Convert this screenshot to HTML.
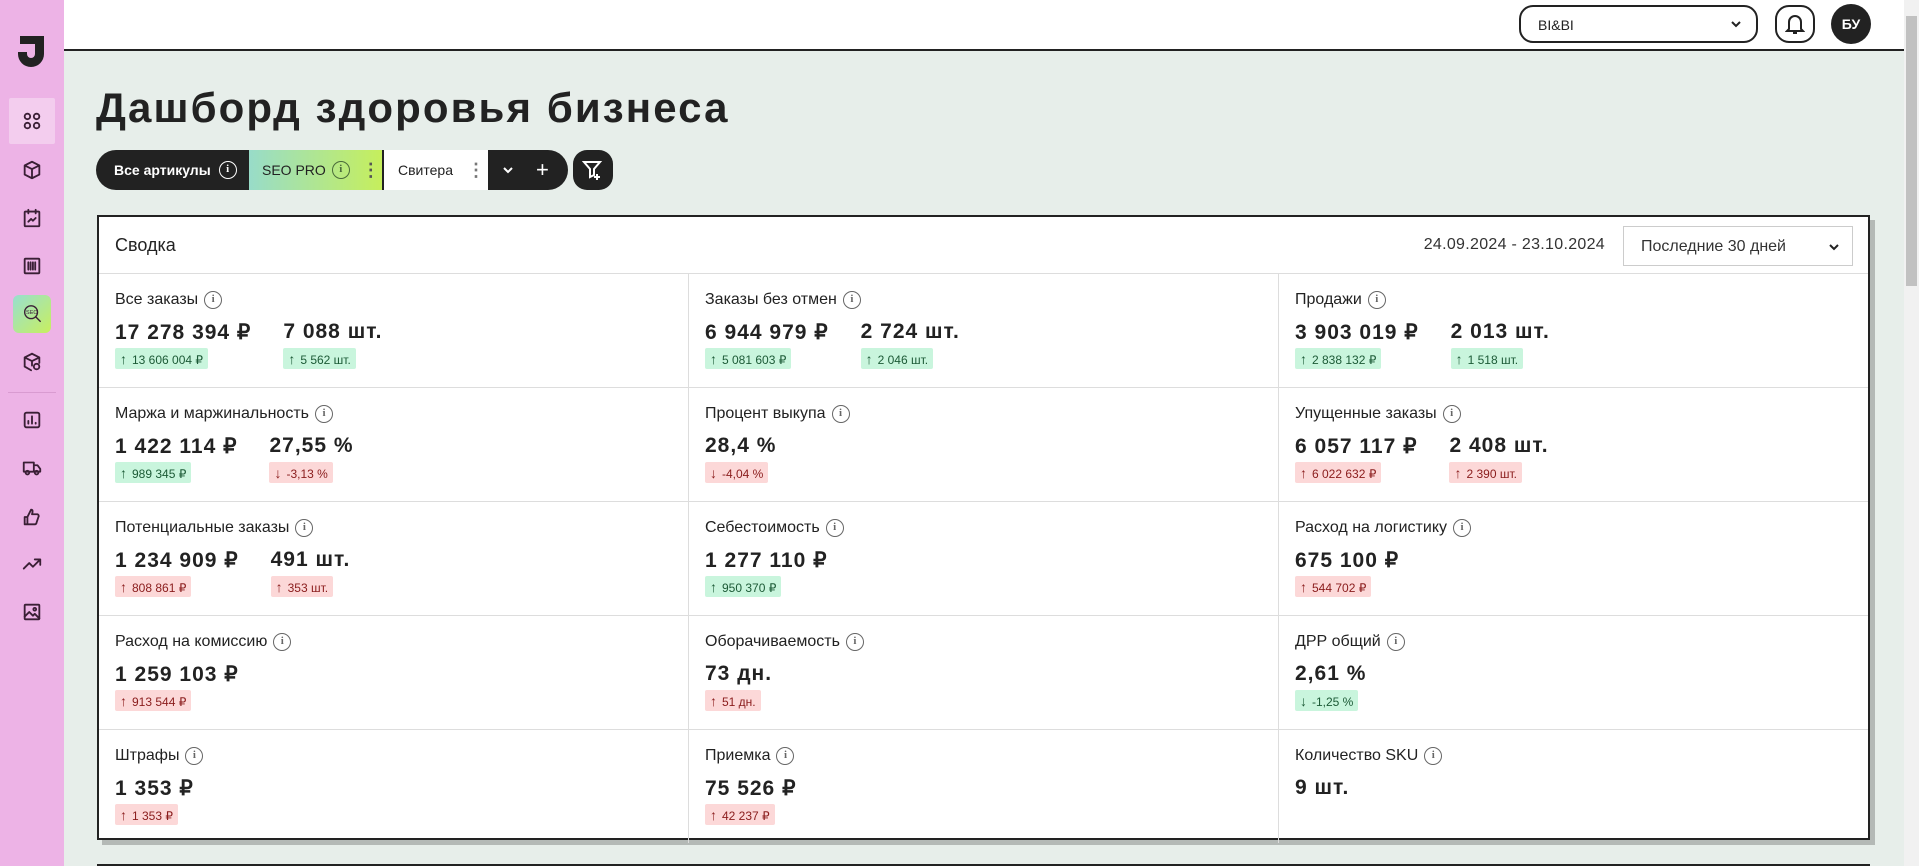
<!DOCTYPE html>
<html><head><meta charset="utf-8"><style>
*{box-sizing:border-box;margin:0;padding:0}
body{width:1919px;height:866px;overflow:hidden;background:#e7eeea;font-family:"Liberation Sans",sans-serif;color:#222;position:relative}
.side{position:absolute;left:0;top:0;width:64px;height:866px;background:#edb3e6}
.side .it{position:absolute;left:9px;width:46px;height:46px;display:flex;align-items:center;justify-content:center}
.side svg{width:22px;height:22px;fill:none;stroke:#3a1f35;stroke-width:2;stroke-linecap:round;stroke-linejoin:round}
.hdr{position:absolute;left:64px;top:0;width:1840px;height:51px;background:#fff;border-bottom:2px solid #222}
.scroll{position:absolute;right:0;top:0;width:15px;height:866px;background:#f1f1f1}
.scroll div{position:absolute;left:2px;top:16px;width:11px;height:270px;background:#c1c1c1}
.sel{position:absolute;left:1455px;top:5px;width:239px;height:38px;border:2px solid #222;border-radius:14px;font-size:14px;padding:10px 0 0 17px}
.bell{position:absolute;left:1711px;top:5px;width:40px;height:38px;border:2px solid #222;border-radius:14px;display:flex;align-items:center;justify-content:center}
.av{position:absolute;left:1767px;top:4px;width:40px;height:40px;border-radius:50%;background:#222;color:#fff;font-weight:bold;font-size:14px;display:flex;align-items:center;justify-content:center}
h1{position:absolute;left:96px;top:84px;font-size:42px;font-weight:bold;letter-spacing:2.1px;color:#222}
.bar{position:absolute;left:96px;top:150px;height:40px;width:472px;background:#222;border-radius:20px;overflow:hidden;display:flex;font-size:14px}
.bar>div{height:40px;display:flex;align-items:center}
.fbtn{position:absolute;left:573px;top:150px;width:40px;height:40px;background:#222;border-radius:14px;display:flex;align-items:center;justify-content:center}
.card{position:absolute;left:97px;top:215px;width:1773px;height:625px;background:#fff;border:2px solid #222;box-shadow:5px 5px 0 #b4b9b6}
.ch{height:57px;border-bottom:1px solid #ddd;position:relative}
.ch .t{position:absolute;left:16px;top:18px;font-size:18px}
.ch .d{position:absolute;right:263px;top:19px;font-size:16px;color:#333;letter-spacing:0.3px}
.dd{position:absolute;left:1524px;top:9px;width:230px;height:40px;border:1px solid #ccc;font-size:16px;padding:11px 0 0 17px;color:#333}
.row{display:flex;border-bottom:1px solid #ddd}
.row:last-child{border-bottom:none}
.cell{width:590px;height:113px;border-right:1px solid #ddd;padding:16px 0 0 16px}
.cell:last-child{border-right:none;width:589px}
.lab{font-size:16px;display:flex;align-items:center;height:20px;color:#222}
.i{display:inline-block;width:18px;height:18px;border:1.5px solid #666;border-radius:50%;margin-left:6px;font-size:11px;color:#666;text-align:center;line-height:15px;font-weight:bold;font-family:"Liberation Serif",serif}
.vals{display:flex;margin-top:10px}
.v{margin-right:32px}
.n{font-size:21px;font-weight:bold;letter-spacing:1px;height:24px}
.b{display:inline-block;margin-top:4px;height:21px;padding:3px 5px 0 5px;font-size:12px;border-radius:2px}
.g{background:#c9f5dd;color:#1c5a36}.r{background:#fcd8d8;color:#8a1c1c}
.b b{font-size:14px;margin-right:5px}
.line2{position:absolute;left:97px;top:864px;width:1773px;height:2px;background:#222}
</style></head><body>
<div class="side">
 <div style="position:absolute;left:18px;top:36px;width:28px;height:32px">
  <svg viewBox="0 0 28 32" style="width:28px;height:32px;fill:#222;stroke:none"><path d="M2 0h24v18a13 13 0 0 1-26 0v-2h9v2a4 4 0 0 0 8 0V8H2z"/></svg></div>
 <div class="it" style="top:98px;background:#f3cdee;border-radius:2px"><svg viewBox="0 0 24 24"><rect x="4" y="4" width="6" height="6" rx="3"/><rect x="14" y="4" width="6" height="6" rx="3"/><rect x="4" y="14" width="6" height="6" rx="3"/><rect x="14" y="14" width="6" height="6" rx="3"/></svg></div>
 <div class="it" style="top:147px"><svg viewBox="0 0 24 24"><path d="M12 3l8 4v10l-8 4-8-4V7z M4 7l8 4 8-4 M12 11v10"/></svg></div>
 <div class="it" style="top:195px"><svg viewBox="0 0 24 24"><rect x="4" y="5" width="16" height="16" rx="1"/><path d="M8 3v4M16 3v4M8 16l3-3 2 2 3-3"/></svg></div>
 <div class="it" style="top:243px"><svg viewBox="0 0 24 24"><rect x="4" y="4" width="16" height="16" rx="1"/><path d="M8 8v8M10.5 8v8M13 8v8M15.5 8v8"/></svg></div>
 <div class="it" style="top:295px;left:13px;width:38px;height:38px;background:linear-gradient(135deg,#98dfd0,#c8ef5e);border-radius:6px"><svg viewBox="0 0 24 24" style="stroke-width:1.5"><circle cx="11" cy="10" r="7"/><path d="M16 15l5 5"/><text x="5.5" y="12" font-size="6" fill="#3a1f35" stroke="none" font-family="Liberation Sans">SEO</text></svg></div>
 <div class="it" style="top:339px"><svg viewBox="0 0 24 24"><path d="M12 3l8 4v6M4 7l8-4M4 7v10l7 4M4 7l8 4 8-4M12 11v5"/><circle cx="17" cy="17" r="3"/></svg></div>
 <div style="position:absolute;left:8px;top:392px;width:48px;height:1px;background:#d99bd1"></div>
 <div class="it" style="top:397px"><svg viewBox="0 0 24 24"><rect x="4" y="4" width="16" height="16" rx="2"/><path d="M8 16v-3M12 16V8M16 16v-1"/></svg></div>
 <div class="it" style="top:445px"><svg viewBox="0 0 24 24"><path d="M3 6h11v10H3zM14 9h4l3 4v3h-7z"/><circle cx="7" cy="17" r="2"/><circle cx="17" cy="17" r="2"/></svg></div>
 <div class="it" style="top:494px"><svg viewBox="0 0 24 24"><path d="M4 12h3v8H4zM7 12l4-8c2 0 2 2 1 5h6a2 2 0 0 1 1 3l-2 6a2 2 0 0 1-2 2H7"/></svg></div>
 <div class="it" style="top:541px"><svg viewBox="0 0 24 24"><path d="M3 17l6-6 4 4 8-8M15 7h6v6"/></svg></div>
 <div class="it" style="top:589px"><svg viewBox="0 0 24 24"><rect x="4" y="4" width="16" height="16" rx="1"/><path d="M4 17l5-5 4 4 2-2 5 5"/><circle cx="15" cy="9" r="1.5"/></svg></div>
</div>
<div class="hdr">
 <div class="sel">BI&amp;BI<svg style="position:absolute;right:14px;top:12px" width="12" height="10" viewBox="0 0 12 10"><path d="M2 3l4 4 4-4" stroke="#222" stroke-width="2" fill="none"/></svg></div>
 <div class="bell"><svg width="20" height="22" viewBox="0 0 20 22" fill="none" stroke="#222" stroke-width="2"><path d="M4 16V9a6 6 0 0 1 12 0v7l2 2H2zM8 20h4"/></svg></div>
 <div class="av">БУ</div>
</div>
<div class="scroll"><div></div></div>
<h1>Дашборд здоровья бизнеса</h1>
<div class="bar">
 <div style="width:153px;color:#fff;font-weight:bold;padding-left:18px">Все артикулы <span class="i" style="border-color:#fff;color:#fff;margin-left:8px">i</span></div>
 <div style="width:133px;background:linear-gradient(90deg,#98dcc9,#c6ef5c);padding-left:13px;color:#222">SEO PRO <span class="i" style="border-color:#4a6a3a;color:#4a6a3a">i</span><span style="margin-left:12px;color:#555;font-weight:bold;font-size:18px">⋮</span></div>
 <div style="width:104px;background:#fff;margin-left:2px;padding-left:14px">Свитера<span style="margin-left:14px;color:#777;font-weight:bold;font-size:18px">⋮</span></div>
 <div style="color:#fff;padding-left:14px"><svg width="12" height="10" viewBox="0 0 12 10"><path d="M2 3l4 4 4-4" stroke="#fff" stroke-width="2" fill="none"/></svg><span style="margin-left:22px;font-size:22px">+</span></div>
</div>
<div class="fbtn"><svg width="22" height="22" viewBox="0 0 22 22" fill="none" stroke="#fff" stroke-width="2"><path d="M2 3h16l-6 7v6l-4 2v-8z M15 15v6M12 18h6"/></svg></div>
<div class="card">
 <div class="ch"><span class="t">Сводка</span><span class="d">24.09.2024 - 23.10.2024</span>
 <div class="dd">Последние 30 дней<svg style="position:absolute;right:12px;top:15px" width="12" height="10" viewBox="0 0 12 10"><path d="M2 3l4 4 4-4" stroke="#222" stroke-width="2" fill="none"/></svg></div></div>
 <div class="row">
  <div class="cell"><div class="lab">Все заказы<span class="i">i</span></div><div class="vals"><div class="v"><div class="n">17 278 394 ₽</div><span class="b g"><b>↑</b>13 606 004 ₽</span></div><div class="v"><div class="n">7 088 шт.</div><span class="b g"><b>↑</b>5 562 шт.</span></div></div></div>
  <div class="cell"><div class="lab">Заказы без отмен<span class="i">i</span></div><div class="vals"><div class="v"><div class="n">6 944 979 ₽</div><span class="b g"><b>↑</b>5 081 603 ₽</span></div><div class="v"><div class="n">2 724 шт.</div><span class="b g"><b>↑</b>2 046 шт.</span></div></div></div>
  <div class="cell"><div class="lab">Продажи<span class="i">i</span></div><div class="vals"><div class="v"><div class="n">3 903 019 ₽</div><span class="b g"><b>↑</b>2 838 132 ₽</span></div><div class="v"><div class="n">2 013 шт.</div><span class="b g"><b>↑</b>1 518 шт.</span></div></div></div>
 </div>
 <div class="row">
  <div class="cell"><div class="lab">Маржа и маржинальность<span class="i">i</span></div><div class="vals"><div class="v"><div class="n">1 422 114 ₽</div><span class="b g"><b>↑</b>989 345 ₽</span></div><div class="v"><div class="n">27,55 %</div><span class="b r"><b>↓</b>-3,13 %</span></div></div></div>
  <div class="cell"><div class="lab">Процент выкупа<span class="i">i</span></div><div class="vals"><div class="v"><div class="n">28,4 %</div><span class="b r"><b>↓</b>-4,04 %</span></div></div></div>
  <div class="cell"><div class="lab">Упущенные заказы<span class="i">i</span></div><div class="vals"><div class="v"><div class="n">6 057 117 ₽</div><span class="b r"><b>↑</b>6 022 632 ₽</span></div><div class="v"><div class="n">2 408 шт.</div><span class="b r"><b>↑</b>2 390 шт.</span></div></div></div>
 </div>
 <div class="row">
  <div class="cell"><div class="lab">Потенциальные заказы<span class="i">i</span></div><div class="vals"><div class="v"><div class="n">1 234 909 ₽</div><span class="b r"><b>↑</b>808 861 ₽</span></div><div class="v"><div class="n">491 шт.</div><span class="b r"><b>↑</b>353 шт.</span></div></div></div>
  <div class="cell"><div class="lab">Себестоимость<span class="i">i</span></div><div class="vals"><div class="v"><div class="n">1 277 110 ₽</div><span class="b g"><b>↑</b>950 370 ₽</span></div></div></div>
  <div class="cell"><div class="lab">Расход на логистику<span class="i">i</span></div><div class="vals"><div class="v"><div class="n">675 100 ₽</div><span class="b r"><b>↑</b>544 702 ₽</span></div></div></div>
 </div>
 <div class="row">
  <div class="cell"><div class="lab">Расход на комиссию<span class="i">i</span></div><div class="vals"><div class="v"><div class="n">1 259 103 ₽</div><span class="b r"><b>↑</b>913 544 ₽</span></div></div></div>
  <div class="cell"><div class="lab">Оборачиваемость<span class="i">i</span></div><div class="vals"><div class="v"><div class="n">73 дн.</div><span class="b r"><b>↑</b>51 дн.</span></div></div></div>
  <div class="cell"><div class="lab">ДРР общий<span class="i">i</span></div><div class="vals"><div class="v"><div class="n">2,61 %</div><span class="b g"><b>↓</b>-1,25 %</span></div></div></div>
 </div>
 <div class="row">
  <div class="cell"><div class="lab">Штрафы<span class="i">i</span></div><div class="vals"><div class="v"><div class="n">1 353 ₽</div><span class="b r"><b>↑</b>1 353 ₽</span></div></div></div>
  <div class="cell"><div class="lab">Приемка<span class="i">i</span></div><div class="vals"><div class="v"><div class="n">75 526 ₽</div><span class="b r"><b>↑</b>42 237 ₽</span></div></div></div>
  <div class="cell"><div class="lab">Количество SKU<span class="i">i</span></div><div class="vals"><div class="v"><div class="n">9 шт.</div></div></div></div>
 </div>
</div>
<div class="line2"></div>
</body></html>
